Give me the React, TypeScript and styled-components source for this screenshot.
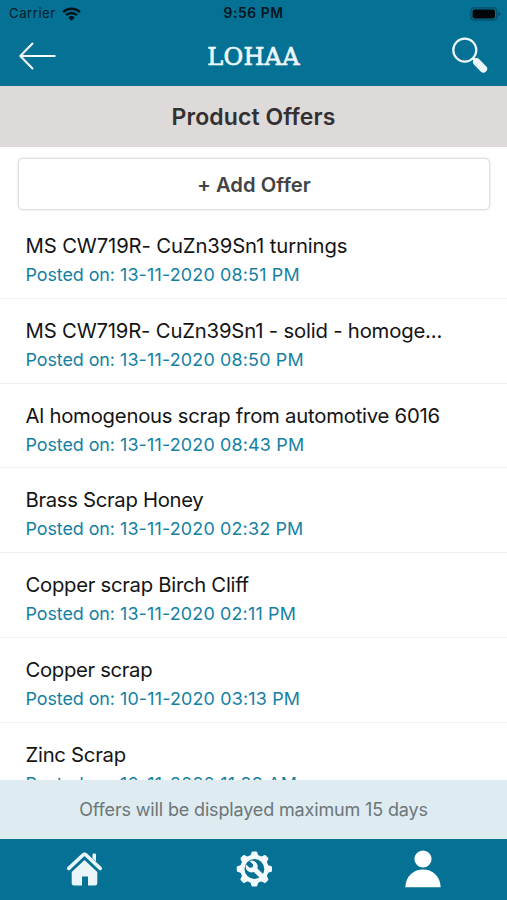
import React from 'react';
import styled, { createGlobalStyle } from 'styled-components';

const Global = createGlobalStyle`
  *, *::before, *::after { box-sizing: border-box; }
  body { margin: 0; background: #fff; font-family: Inter, "Liberation Sans", sans-serif; }
`;

const Screen = styled.div`
  display: flex;
  flex-direction: column;
  width: 507px;
  height: 900px;
  overflow: hidden;
  background: #fff;
`;

const Header = styled.header`
  flex: 0 0 86.4px;
  background: #047195;
`;

const StatusBar = styled.div`
  display: grid;
  grid-template-columns: 1fr auto 1fr;
  align-items: center;
  height: 27px;
  padding: 0 6px 0 9px;
  color: #06202a;
  font-size: 13.2px;
  line-height: 27px;
`;

const Carrier = styled.div`
  display: flex;
  align-items: center;
  gap: 6px;
  letter-spacing: 0.5px;
`;

const Clock = styled.div`
  margin-right: 3px;
  font-size: 13.8px;
  font-weight: 600;
  letter-spacing: 0.6px;
  color: #03151c;
`;

const BatterySlot = styled.div`
  display: flex;
  justify-content: flex-end;
`;

const NavBar = styled.div`
  display: grid;
  grid-template-columns: 1fr auto 1fr;
  grid-template-rows: 58px;
  align-items: center;
  padding: 0 18px;
`;

const Brand = styled.h1`
  margin: 0;
  padding-top: 2px;
  color: #eef8fb;
  font-family: "DejaVu Serif", serif;
  font-size: 24px;
  font-weight: 400;
  line-height: 56px;
  letter-spacing: 0.25px;
  -webkit-text-stroke: 0.7px #eef8fb;
`;

const IconButton = styled.button<{ $end?: boolean }>`
  display: flex;
  justify-self: ${({ $end }) => ($end ? 'end' : 'start')};
  padding: ${({ $end }) => ($end ? '0 0 1px' : '0')};
  border: 0;
  background: none;
`;

const PageTitle = styled.h2`
  flex: 0 0 61.1px;
  margin: 0;
  padding-top: 1px;
  background: #dedad9;
  color: #333031;
  font-size: 23px;
  font-weight: 600;
  line-height: 60px;
  text-align: center;
  letter-spacing: 0.08px;
`;

const AddOffer = styled.button`
  flex: 0 0 52px;
  margin: 10.5px 17px 0 18px;
  padding: 1px 0 0;
  border: 1px solid #dfe0e1;
  border-radius: 5px;
  background: #fff;
  box-shadow: 0 0 2px rgba(0, 0, 0, 0.18);
  color: #434343;
  font-family: inherit;
  font-size: 20.2px;
  font-weight: 600;
  letter-spacing: 0.05px;
`;

const OfferList = styled.ul`
  flex: 1 1 0;
  min-height: 0;
  margin: 4.2px 0 0;
  padding: 0;
  overflow: hidden;
  list-style: none;
`;

const OfferRow = styled.li`
  height: 84.75px;
  padding: 17px 25.5px 0;
  border-bottom: 1px solid #f0f0f1;
`;

const OfferName = styled.div<{ $tracking: number }>`
  color: #141414;
  font-size: 20.3px;
  line-height: 30px;
  letter-spacing: ${({ $tracking }) => $tracking}px;
  white-space: nowrap;
`;

const OfferDate = styled.div`
  color: #1481a3;
  font-size: 17.9px;
  line-height: 28px;
  letter-spacing: -0.06px;
  white-space: nowrap;
`;

const Timestamp = styled.time`
  letter-spacing: 0.18px;
`;

const Notice = styled.div`
  flex: 0 0 58.5px;
  background: #deebf0;
  color: #6c7679;
  font-size: 18px;
  line-height: 59px;
  letter-spacing: -0.15px;
  text-align: center;
`;

const TabBar = styled.nav`
  display: grid;
  grid-template-columns: repeat(3, 1fr);
  flex: 0 0 61px;
  background: #047195;
`;

const Tab = styled.a`
  display: flex;
  align-items: center;
  justify-content: center;
  padding-bottom: 1px;
`;

const offers = [
  { name: 'MS CW719R- CuZn39Sn1 turnings', date: '13-11-2020 08:51 PM', tracking: -0.13 },
  { name: 'MS CW719R- CuZn39Sn1 - solid - homoge...', date: '13-11-2020 08:50 PM', tracking: -0.18 },
  { name: 'Al homogenous scrap from automotive 6016', date: '13-11-2020 08:43 PM', tracking: -0.23 },
  { name: 'Brass Scrap Honey', date: '13-11-2020 02:32 PM', tracking: -0.31 },
  { name: 'Copper scrap Birch Cliff', date: '13-11-2020 02:11 PM', tracking: -0.28 },
  { name: 'Copper scrap', date: '10-11-2020 03:13 PM', tracking: -0.33 },
  { name: 'Zinc Scrap', date: '10-11-2020 11:29 AM', tracking: -0.27 },
];

const WifiIcon = () => (
  <svg width="19" height="14" viewBox="0 0 19 14" fill="none" stroke="#03151c">
    <path d="M1.1 5.1a12.1 12.1 0 0 1 16.8 0" strokeWidth="2.5" />
    <path d="M4 8.2a7.9 7.9 0 0 1 11 0" strokeWidth="2.4" />
    <path d="M9.5 13.7 6.2 10.4a4.8 4.8 0 0 1 6.6 0Z" fill="#03151c" stroke="none" />
  </svg>
);

const BatteryIcon = () => (
  <svg width="31" height="14" viewBox="0 0 31 14">
    <rect x=".8" y=".8" width="26" height="12.4" rx="3.5" fill="none" stroke="#044e67" strokeWidth="1.2" />
    <rect x="2.6" y="2.6" width="22.4" height="8.8" rx="2" fill="#000609" />
    <path d="M28.4 4.8q2 .7 2 2.2t-2 2.2Z" fill="#044e67" />
  </svg>
);

const BackIcon = () => (
  <svg width="39" height="28" viewBox="0 0 39 28" fill="none" stroke="#f4fcff" strokeWidth="2.1" strokeLinecap="round" strokeLinejoin="round">
    <path d="M14.5 1.5 2.3 14l12.2 12.5M2.3 14h34.4" />
  </svg>
);

const SearchIcon = () => (
  <svg width="37" height="37" viewBox="0 0 37 37" fill="none" stroke="#edf7fa">
    <circle cx="12.8" cy="13.1" r="11.5" strokeWidth="2.2" />
    <path d="m21 21 3 3" strokeWidth="2.5" />
    <path d="m24.8 25.1 6.6 6.7" strokeWidth="7.6" strokeLinecap="round" />
  </svg>
);

const HomeIcon = () => (
  <svg width="36" height="36" viewBox="0.5 0 36 36">
    <path d="M26 6.5V3.8q0-1.2 1.1-1.2h1.3q1.1 0 1.1 1.2v6.8L26 7.4Z" fill="#e9f5f9" />
    <path d="M2.3 17.4 16.2 4.2q1.8-1.7 3.6 0L33.7 17.4" fill="none" stroke="#e9f5f9" strokeWidth="3.6" strokeLinecap="round" strokeLinejoin="round" />
    <path d="m18 9 12.8 12v11.2q0 2.4-2.4 2.4h-6.9v-9.2h-6v9.2H7.6q-2.4 0-2.4-2.4V21Z" fill="#e9f5f9" />
  </svg>
);

const SettingsIcon = () => (
  <svg width="36" height="36" viewBox="-18.4 -18 36 36">
    <g fill="#f5fcff">
      <circle r="14.2" />
      {[0, 45, 90, 135, 180, 225, 270, 315].map((angle) => (
        <path key={angle} d="M-4.1-13-2.7-17q.3-.6 1-.6h3.4q.7 0 1 .6L4.1-13Z" transform={`rotate(${angle})`} />
      ))}
    </g>
    <circle r="9.9" fill="#047195" />
    <path d="M-4.8-8A6 6 0 0 1 3-.6L10.2 6.6 6.7 10.1-.5 3.1A6 6 0 0 1-8.3-4.6L-4.8-1.2-1.7-1.8-1.2-4.6Z" fill="#f5fcff" />
  </svg>
);

const ProfileIcon = () => (
  <svg width="36" height="38" viewBox="0 0 36 38" fill="#fff">
    <circle cx="18" cy="9" r="8.6" />
    <path d="M.3 37.2Q.7 28.8 6 23.9q5-4.4 12-4.4t12 4.4q5.3 4.9 5.7 13.3Z" />
  </svg>
);

export default function App() {
  return (
    <Screen>
      <Global />
      <Header>
        <StatusBar>
          <Carrier>
            Carrier
            <WifiIcon />
          </Carrier>
          <Clock>9:56 PM</Clock>
          <BatterySlot>
            <BatteryIcon />
          </BatterySlot>
        </StatusBar>
        <NavBar>
          <IconButton aria-label="Back">
            <BackIcon />
          </IconButton>
          <Brand>LOHAA</Brand>
          <IconButton $end aria-label="Search">
            <SearchIcon />
          </IconButton>
        </NavBar>
      </Header>
      <PageTitle>Product Offers</PageTitle>
      <AddOffer>+ Add Offer</AddOffer>
      <OfferList>
        {offers.map((offer) => (
          <OfferRow key={offer.name}>
            <OfferName $tracking={offer.tracking}>{offer.name}</OfferName>
            <OfferDate>
              Posted on: <Timestamp>{offer.date}</Timestamp>
            </OfferDate>
          </OfferRow>
        ))}
      </OfferList>
      <Notice>Offers will be displayed maximum 15 days</Notice>
      <TabBar>
        <Tab aria-label="Home">
          <HomeIcon />
        </Tab>
        <Tab aria-label="Services">
          <SettingsIcon />
        </Tab>
        <Tab aria-label="Profile">
          <ProfileIcon />
        </Tab>
      </TabBar>
    </Screen>
  );
}
